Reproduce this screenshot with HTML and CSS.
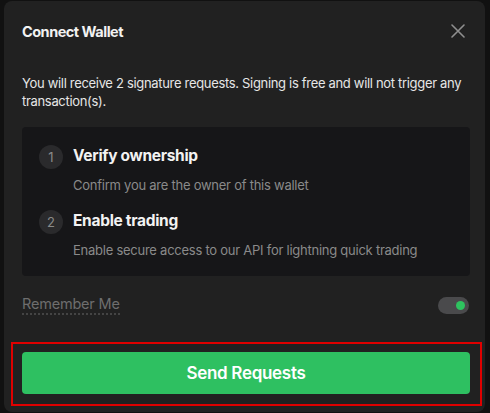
FILE: index.html
```html
<!DOCTYPE HTML><html>
<head>
  <title>Connect Wallet</title>
  <meta name="viewport" content="width=device-width, initial-scale=1">
  <meta charset="UTF-8">
  <link rel="stylesheet" href="styles.css">
</head>
<body>
  <div class="modal">
    <div class="header">
      <h1>Connect Wallet</h1>
      <button class="close" aria-label="Close">
        <svg width="14" height="14" viewBox="0 0 14 14"><path d="M1 1L13 13M13 1L1 13" stroke="#8f8f8f" stroke-width="1.6" stroke-linecap="round"/></svg>
      </button>
    </div>
    <p class="intro">You will receive 2 signature requests. Signing is free and will not trigger any transaction(s).</p>
    <div class="steps">
      <div class="step">
        <span class="num">1</span>
        <div>
          <h2>Verify ownership</h2>
          <p>Confirm you are the owner of this wallet</p>
        </div>
      </div>
      <div class="step">
        <span class="num">2</span>
        <div>
          <h2>Enable trading</h2>
          <p>Enable secure access to our API for lightning quick trading</p>
        </div>
      </div>
    </div>
    <div class="remember">
      <span class="label">Remember Me</span>
      <span class="toggle"><span class="knob"></span></span>
    </div>
    <div class="highlight">
      <button class="send">Send Requests</button>
    </div>
  </div>
</body>
</html>
```

FILE: styles.css
```css
html {
  font-family: Inter, "Noto Sans", sans-serif;
  background-color: #111111;
}
body {
  margin: 0;
  padding: 1px 5px 1px 4px;
}
.modal {
  background-color: #212121;
  border-radius: 8px;
  height: 411px;
  box-sizing: border-box;
  padding: 0 0 0 18px;
}
.header {
  display: flex;
  justify-content: space-between;
  align-items: center;
  padding: 19px 20px 0 0;
  height: 22px;
}
h1 {
  margin: 0;
  font-size: 14.5px;
  font-weight: 700;
  color: #f2f2f2;
  letter-spacing: -0.5px;
}
.close {
  background: none;
  border: none;
  padding: 0;
  display: flex;
}
.intro {
  margin: 32px 14px 0 0;
  font-size: 13px;
  line-height: 18px;
  color: #e6e6e6;
  letter-spacing: -0.32px;
}
.steps {
  margin: 17px 15px 0 0;
  background-color: #161618;
  border-radius: 4px;
  height: 149px;
  box-sizing: border-box;
  padding: 18px 0 0 17px;
}
.step {
  display: flex;
  gap: 10px;
  margin-bottom: 17px;
}
.num {
  width: 24px;
  height: 24px;
  border-radius: 50%;
  background-color: #2a2a2c;
  color: #8a8a8a;
  font-size: 13px;
  display: flex;
  align-items: center;
  justify-content: center;
  flex-shrink: 0;
}
h2 {
  margin: 0;
  font-size: 15.5px;
  font-weight: 700;
  color: #f2f2f2;
  line-height: 22px;
  letter-spacing: -0.3px;
}
.step p {
  margin: 10px 0 0;
  font-size: 13px;
  color: #8a8a8a;
  letter-spacing: -0.25px;
}
.remember {
  display: flex;
  justify-content: space-between;
  align-items: center;
  margin: 20px 16px 0 0;
  height: 18px;
}
.label {
  font-size: 14.5px;
  color: #6e6e6e;
  border-bottom: 2px dotted #444;
  padding-bottom: 1px;
  letter-spacing: -0.2px;
}
.toggle {
  width: 31px;
  height: 17px;
  border-radius: 9px;
  background-color: #4a4a4c;
  display: flex;
  align-items: center;
  justify-content: flex-end;
  padding-right: 4px;
  box-sizing: border-box;
}
.knob {
  width: 9px;
  height: 9px;
  border-radius: 50%;
  background-color: #2ec35f;
}
.highlight {
  margin: 28px 0 0 -11px;
  width: 471px;
  height: 64px;
  box-sizing: border-box;
  border: 2px solid #e00000;
  padding: 8px 0 0 9px;
}
.send {
  width: 448px;
  height: 42px;
  border: none;
  border-radius: 4px;
  background-color: #2ec061;
  color: #ffffff;
  font-family: Inter, "Noto Sans", sans-serif;
  font-size: 17px;
  font-weight: 600;
  letter-spacing: -0.3px;
  padding-bottom: 2px;
}
```
